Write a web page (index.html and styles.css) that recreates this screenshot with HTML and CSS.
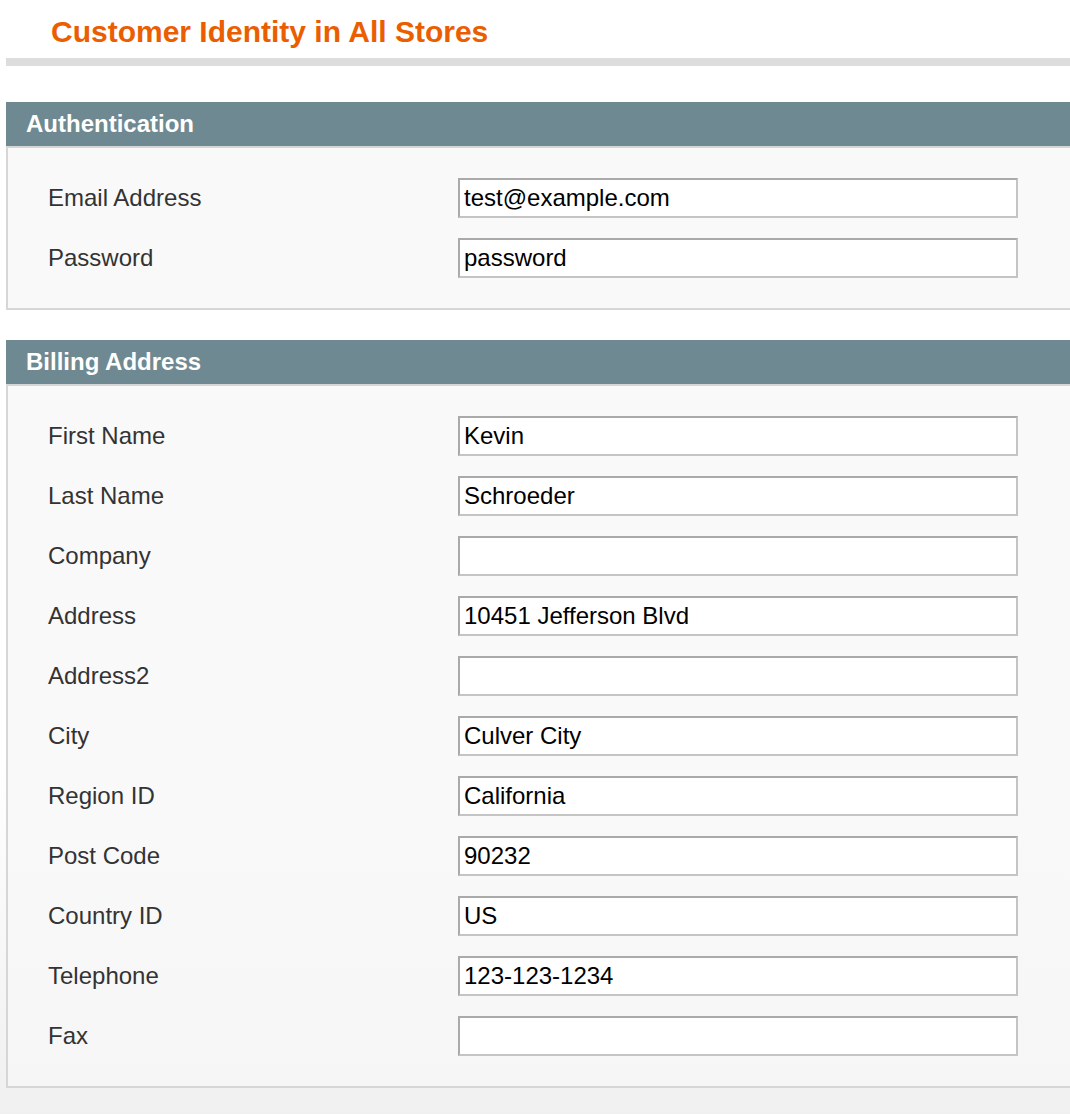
FILE: index.html
```html
<!DOCTYPE html>
<html lang="en">
<head>
<meta charset="utf-8">
<title>Customer Identity in All Stores</title>
<link rel="stylesheet" href="styles.css">
</head>
<body>
<div class="page">
  <div class="page-head">
    <h3 class="page-title">Customer Identity in All Stores</h3>
  </div>

  <div class="section">
    <div class="section-head"><h4>Authentication</h4></div>
    <div class="section-body">
      <label class="field-label">Email Address</label>
      <input class="field-input" type="text" value="test@example.com">
      <label class="field-label">Password</label>
      <input class="field-input" type="text" value="password">
    </div>
  </div>

  <div class="section">
    <div class="section-head"><h4>Billing Address</h4></div>
    <div class="section-body section-body-long">
      <label class="field-label">First Name</label>
      <input class="field-input" type="text" value="Kevin">
      <label class="field-label">Last Name</label>
      <input class="field-input" type="text" value="Schroeder">
      <label class="field-label">Company</label>
      <input class="field-input" type="text" value="">
      <label class="field-label">Address</label>
      <input class="field-input" type="text" value="10451 Jefferson Blvd">
      <label class="field-label">Address2</label>
      <input class="field-input" type="text" value="">
      <label class="field-label">City</label>
      <input class="field-input" type="text" value="Culver City">
      <label class="field-label">Region ID</label>
      <input class="field-input" type="text" value="California">
      <label class="field-label">Post Code</label>
      <input class="field-input" type="text" value="90232">
      <label class="field-label">Country ID</label>
      <input class="field-input" type="text" value="US">
      <label class="field-label">Telephone</label>
      <input class="field-input" type="text" value="123-123-1234">
      <label class="field-label">Fax</label>
      <input class="field-input" type="text" value="">
    </div>
  </div>
</div>
</body>
</html>
```

FILE: styles.css
```css
html {
  background: linear-gradient(to bottom, #ffffff 0, #ffffff 760px, #f0f0f0 1114px);
  min-height: 100%;
}

body {
  margin: 0;
  padding: 0 0 0 6px;
  overflow-x: hidden;
  font-family: "Liberation Sans", Arial, Helvetica, sans-serif;
}

.page {
  display: flex;
  flex-direction: column;
}

.page-head {
  padding-top: 14px;
  border-bottom: 8px solid #dddddd;
  margin-bottom: 36px;
}

.page-title {
  margin: 0 0 8px 0;
  padding-left: 45px;
  font-size: 30px;
  line-height: 36px;
  font-weight: bold;
  color: #eb5e00;
}

.section {
  margin-bottom: 30px;
}

.section-head {
  background: #6f8992;
  height: 44px;
  border-bottom: 2px solid #d6d6d6;
}

.section-head h4 {
  margin: 0;
  padding-left: 20px;
  font-size: 24px;
  line-height: 44px;
  font-weight: bold;
  color: #ffffff;
}

.section-body {
  background: #f9f9f9;
  border-left: 2px solid #d6d6d6;
  border-bottom: 2px solid #d6d6d6;
  padding: 30px 0 30px 40px;
  display: grid;
  grid-template-columns: 410px 560px;
  row-gap: 20px;
  align-items: center;
}

.section-body-long {
  background: linear-gradient(to bottom, #f9f9f9 0, #f9f9f9 60%, #f6f6f6 100%);
}

.field-label {
  font-size: 24px;
  color: #333333;
  line-height: 28px;
}

.field-input {
  box-sizing: border-box;
  width: 560px;
  height: 40px;
  margin: 0;
  padding: 0 4px;
  border-style: solid;
  border-width: 2px;
  border-color: #aaaaaa #c4c4c4 #c4c4c4 #aaaaaa;
  background: #ffffff;
  font-family: "Liberation Sans", Arial, Helvetica, sans-serif;
  font-size: 24px;
  color: #000000;
  outline: none;
}
```
